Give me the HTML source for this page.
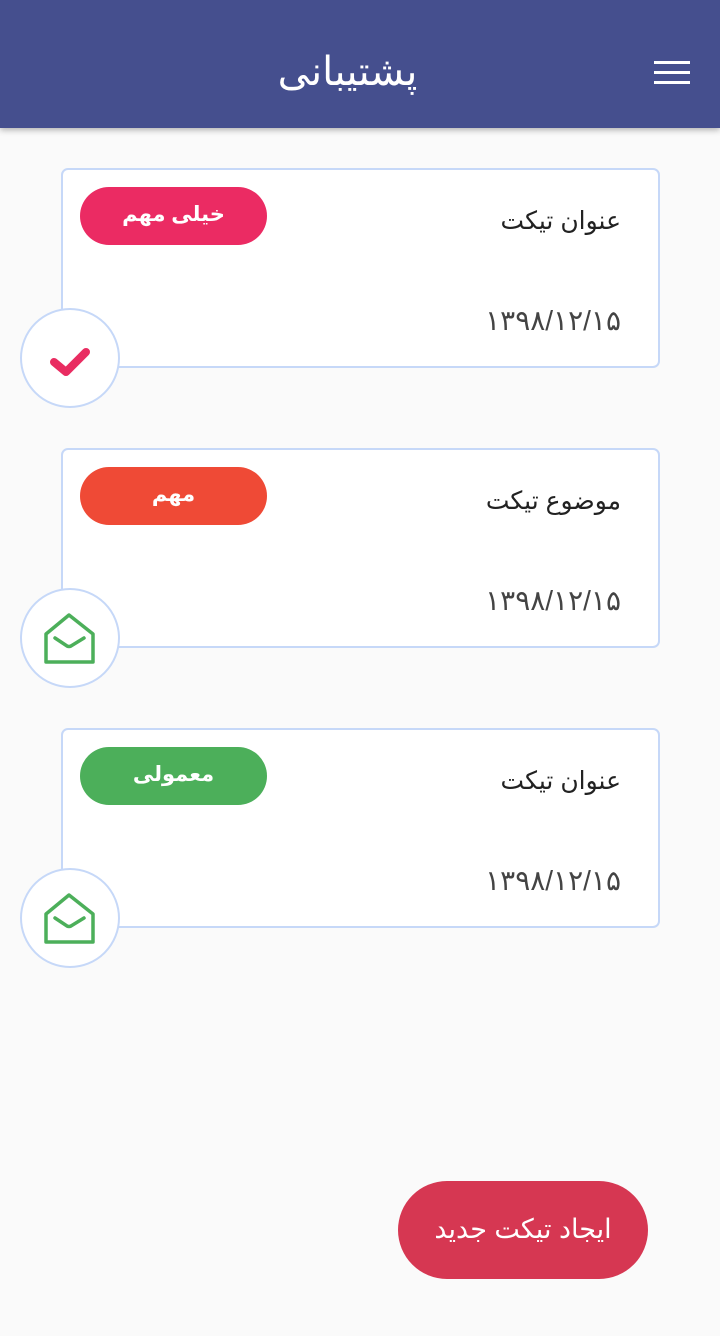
<!DOCTYPE html>
<html dir="rtl"><head><meta charset="utf-8"><style>
body{margin:0;width:720px;height:1336px;background:#fafafa;font-family:"Liberation Sans","DejaVu Sans",sans-serif;position:relative;overflow:hidden}
.hdr{position:absolute;left:0;top:0;width:720px;height:128px;background:#454f8e;box-shadow:0 2px 6px rgba(0,0,0,.3)}
.hdr .t{position:absolute;left:0;width:695px;top:44px;text-align:center;color:#fff;font-size:40px;line-height:56px}
.ham{position:absolute;left:654px;width:36px;height:3px;background:#fff}
.card{position:absolute;left:61px;width:595px;height:196px;background:#fff;border:2px solid #c6d8f8;border-radius:7px}
.ct{position:absolute;right:37px;top:36px;font-size:25px;color:#222}
.cd{position:absolute;right:37px;top:134px;font-size:28px;color:#444}
.badge{position:absolute;left:17px;top:17px;width:187px;height:58px;border-radius:29px;color:#fff;font-weight:bold;font-size:21px;text-align:center;line-height:56px}
.circ{position:absolute;left:20px;width:96px;height:96px;border-radius:50%;background:#fff;border:2px solid #c6d8f8}
.circ svg{position:absolute;left:0;top:0}
.btn{position:absolute;left:398px;top:1181px;width:250px;height:98px;border-radius:49px;background:#d63752;color:#fff;font-size:27px;text-align:center;line-height:96px}
</style></head><body>
<div class="hdr"><div class="t">پشتیبانی</div>
<div class="ham" style="top:61px"></div><div class="ham" style="top:71px"></div><div class="ham" style="top:81px"></div></div>

<div class="card" style="top:168px"><div class="badge" style="background:#eb2b63">خیلی مهم</div><div class="ct">عنوان تیکت</div><div class="cd">۱۳۹۸/۱۲/۱۵</div></div>
<div class="circ" style="top:308px"><svg width="96" height="96"><path d="M32 52 L44 62 L64 42" fill="none" stroke="#e92c61" stroke-width="8" stroke-linecap="round" stroke-linejoin="round"/></svg></div>

<div class="card" style="top:448px"><div class="badge" style="background:#ef4a36">مهم</div><div class="ct">موضوع تیکت</div><div class="cd">۱۳۹۸/۱۲/۱۵</div></div>
<div class="circ" style="top:588px"><svg width="96" height="96"><path d="M24 44 L47 25 L71 44 V72 H24 Z" fill="none" stroke="#4caf5a" stroke-width="3.5" stroke-linejoin="round"/><path d="M33 48 L45 56 Q47 57 49 56 L62 48" fill="none" stroke="#4caf5a" stroke-width="3.5" stroke-linecap="round"/></svg></div>

<div class="card" style="top:728px"><div class="badge" style="background:#4caf5a">معمولی</div><div class="ct">عنوان تیکت</div><div class="cd">۱۳۹۸/۱۲/۱۵</div></div>
<div class="circ" style="top:868px"><svg width="96" height="96"><path d="M24 44 L47 25 L71 44 V72 H24 Z" fill="none" stroke="#4caf5a" stroke-width="3.5" stroke-linejoin="round"/><path d="M33 48 L45 56 Q47 57 49 56 L62 48" fill="none" stroke="#4caf5a" stroke-width="3.5" stroke-linecap="round"/></svg></div>

<div class="btn">ایجاد تیکت جدید</div>
</body></html>
